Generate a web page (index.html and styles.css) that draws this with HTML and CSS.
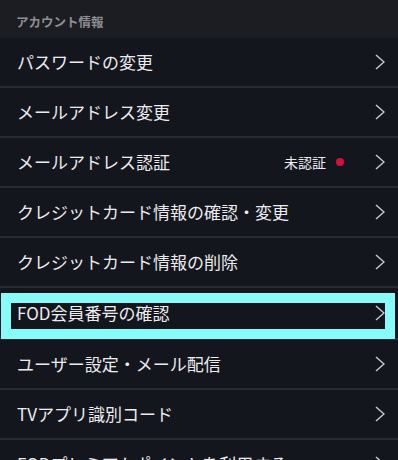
FILE: index.html
```html
<!DOCTYPE html>
<html lang="ja">
<head>
<meta charset="utf-8">
<link rel="stylesheet" href="styles.css">
</head>
<body>
<div class="page">
  <div class="section-head">アカウント情報</div>
  <ul class="menu">
    <li class="row"><span class="label">パスワードの変更</span><span class="chev"><svg viewBox="0 0 10 16" width="10" height="16"><path d="M1 1 L9 8 L1 15" fill="none" stroke="#c9c9cc" stroke-width="1.5"/></svg></span></li>
    <li class="row"><span class="label">メールアドレス変更</span><span class="chev"><svg viewBox="0 0 10 16" width="10" height="16"><path d="M1 1 L9 8 L1 15" fill="none" stroke="#c9c9cc" stroke-width="1.5"/></svg></span></li>
    <li class="row"><span class="label">メールアドレス認証</span><span class="status">未認証</span><span class="dot"></span><span class="chev"><svg viewBox="0 0 10 16" width="10" height="16"><path d="M1 1 L9 8 L1 15" fill="none" stroke="#c9c9cc" stroke-width="1.5"/></svg></span></li>
    <li class="row"><span class="label">クレジットカード情報の確認・変更</span><span class="chev"><svg viewBox="0 0 10 16" width="10" height="16"><path d="M1 1 L9 8 L1 15" fill="none" stroke="#c9c9cc" stroke-width="1.5"/></svg></span></li>
    <li class="row"><span class="label">クレジットカード情報の削除</span><span class="chev"><svg viewBox="0 0 10 16" width="10" height="16"><path d="M1 1 L9 8 L1 15" fill="none" stroke="#c9c9cc" stroke-width="1.5"/></svg></span></li>
    <li class="row row-focus"><span class="label">FOD会員番号の確認</span><span class="chev"><svg viewBox="0 0 10 16" width="10" height="16"><path d="M1 1 L9 8 L1 15" fill="none" stroke="#c9c9cc" stroke-width="1.5"/></svg></span></li>
    <li class="row"><span class="label">ユーザー設定・メール配信</span><span class="chev"><svg viewBox="0 0 10 16" width="10" height="16"><path d="M1 1 L9 8 L1 15" fill="none" stroke="#c9c9cc" stroke-width="1.5"/></svg></span></li>
    <li class="row"><span class="label">TVアプリ識別コード</span><span class="chev"><svg viewBox="0 0 10 16" width="10" height="16"><path d="M1 1 L9 8 L1 15" fill="none" stroke="#c9c9cc" stroke-width="1.5"/></svg></span></li>
    <li class="row"><span class="label">FODプレミアムポイントを利用する</span><span class="chev"><svg viewBox="0 0 10 16" width="10" height="16"><path d="M1 1 L9 8 L1 15" fill="none" stroke="#c9c9cc" stroke-width="1.5"/></svg></span></li>
  </ul>
</div>
</body>
</html>
```

FILE: styles.css
```css
html, body {
  margin: 0;
  padding: 0;
  background: #14161d;
}
body {
  font-family: "Noto Sans CJK JP", "Noto Sans", sans-serif;
  color: #ececee;
}
.page {
  width: 398px;
}
.section-head {
  height: 38px;
  box-sizing: border-box;
  background: #1c1d22;
  color: #8e8f94;
  font-size: 12.5px;
  font-weight: 700;
  line-height: 14px;
  padding: 15px 0 0 16px;
}
.menu {
  list-style: none;
  margin: 0;
  padding: 0;
}
.row {
  position: relative;
  display: flex;
  align-items: center;
  height: 48px;
  padding: 0 13px 0 17px;
  border-bottom: 2px solid #2a2b30;
  background: #14161d;
}
.label {
  flex: 1;
  font-size: 17px;
  line-height: 20px;
  white-space: nowrap;
}
.status {
  font-size: 14px;
  line-height: 18px;
  color: #ececee;
}
.dot {
  width: 8px;
  height: 8px;
  border-radius: 50%;
  background: #d3103c;
  margin-left: 10px;
  margin-right: 21px;
}
.chev {
  display: flex;
  align-items: center;
  width: 10px;
  margin-left: 20px;
}
.dot + .chev {
  margin-left: 10px;
}
.row-focus {
  height: 50px;
}
.row-focus::after {
  content: "";
  position: absolute;
  left: 1px;
  top: 5px;
  width: 394px;
  height: 46px;
  box-sizing: border-box;
  border: 10px solid #88fcf8;
  z-index: 2;
}
```
